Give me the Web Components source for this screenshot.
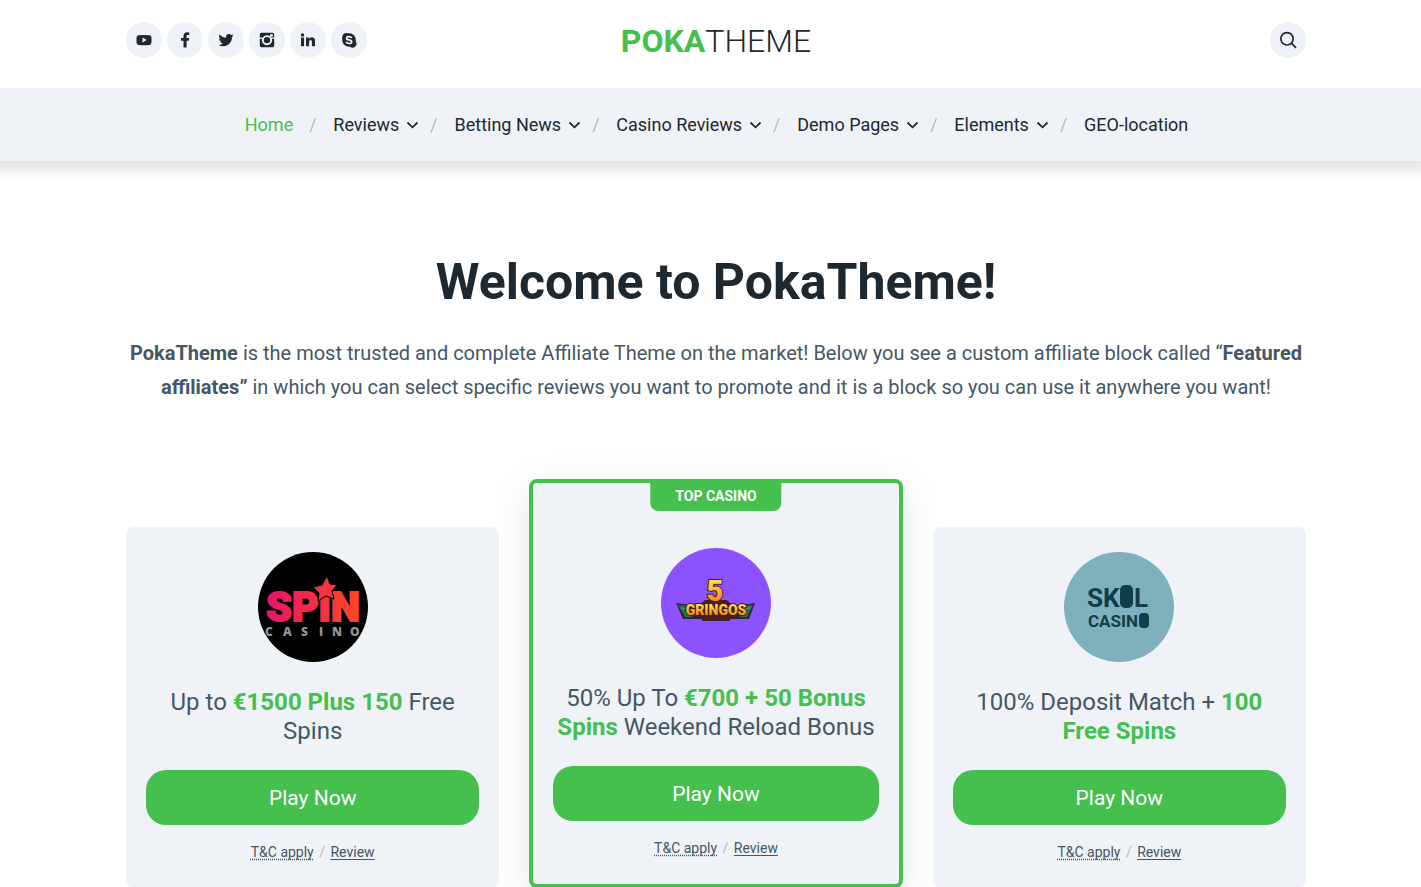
<!DOCTYPE html>
<html lang="en">
<head>
  <meta charset="UTF-8">
  <meta name="viewport" content="width=device-width, initial-scale=1.0">
  <title>PokaTheme</title>
  <style>
    :root {
      --green: #45bf4d;
      --dark: #1e2830;
      --text: #455764;
      --light: #eff3f8;
      --muted: #b4bac0;
      --wrap: 1180px;
      --gutter: 11px;
    }

    html {
      overflow: hidden;
    }

    body {
      margin: 0;
      height: 100vh;
      overflow: hidden auto;
      scrollbar-width: none;
      font-family: Roboto, sans-serif;
      color: var(--text);
      background: #fff;
    }
  </style>
</head>
<body>
  <site-header>
    <social-links slot="left"></social-links>
    <site-logo></site-logo>
    <search-button slot="right"></search-button>
  </site-header>

  <site-nav>
    <nav-item active>Home</nav-item>
    <nav-item menu>Reviews</nav-item>
    <nav-item menu>Betting News</nav-item>
    <nav-item menu>Casino Reviews</nav-item>
    <nav-item menu>Demo Pages</nav-item>
    <nav-item menu>Elements</nav-item>
    <nav-item>GEO-location</nav-item>
  </site-nav>

  <main>
    <page-intro>
      <span slot="title">Welcome to PokaTheme!</span>
      <b>PokaTheme</b> is the most trusted and complete Affiliate Theme on the market! Below you see a custom affiliate block called “<b>Featured affiliates”</b> in which you can select specific reviews you want to promote and it is a block so you can use it anywhere you want!
    </page-intro>

    <featured-affiliates>
      <affiliate-card>
        <spin-logo slot="logo"></spin-logo>
        Up to <strong>€1500 Plus 150</strong> Free Spins
      </affiliate-card>
      <affiliate-card badge="TOP CASINO">
        <gringos-logo slot="logo"></gringos-logo>
        50% Up To <strong>€700 + 50 Bonus Spins</strong> Weekend Reload Bonus
      </affiliate-card>
      <affiliate-card>
        <skol-logo slot="logo"></skol-logo>
        100% Deposit Match + <strong>100 Free Spins</strong>
      </affiliate-card>
    </featured-affiliates>
  </main>

  <script>
    class SiteHeader extends HTMLElement {
      constructor() {
        super();
        this.attachShadow({ mode: "open" });
      }

      static get styles() {
        return /* css */`
          :host {
            display: block;
          }

          header {
            display: grid;
            grid-template-columns: 1fr auto 1fr;
            align-items: center;
            max-width: var(--wrap);
            margin: 0 auto;
            padding: 22px 0 30px var(--gutter);
          }

          .right {
            display: flex;
            justify-content: flex-end;
          }
        `;
      }

      connectedCallback() {
        this.shadowRoot.innerHTML = /* html */`
        <style>${SiteHeader.styles}</style>
        <header>
          <slot name="left"></slot>
          <slot></slot>
          <div class="right"><slot name="right"></slot></div>
        </header>`;
      }
    }

    const SOCIAL_ICONS = {
      YouTube: `<path fill-rule="evenodd" d="M2.5 3.2Q8 2.6 13.5 3.2Q15.3 3.4 15.4 5Q15.7 8 15.4 11Q15.3 12.7 13.5 12.9Q8 13.4 2.5 12.9Q.7 12.7.6 11Q.3 8 .6 5Q.7 3.4 2.5 3.2ZM6.5 5.6V10.4L10.6 8Z"/>`,
      Facebook: `<path d="M12.3.5V3.1H10.8Q9.6 3.1 9.6 4.4V6H12.2L11.8 8.7H9.6V15.5H6.5V8.7H4V6H6.5V4.1Q6.5.3 10.1.3Q11.5.3 12.3.5Z"/>`,
      Twitter: `<path d="M15.5 3.5Q14.8 4.7 14 5.1C14.1 10.2 10.3 14.2 5.3 14.2Q2.6 14.2.6 12.9Q3.2 13 5 11.6Q2.9 11.3 2.1 9.5H3.4Q1.2 8.7 1 6.4L2.4 6.8Q.2 4.9 1.5 2.5Q4.2 5.6 8 5.8C7.4 2.1 11.3.9 13.1 3L15.1 2.3Q14.7 3.4 13.7 4Z"/>`,
      Instagram: `<path fill-rule="evenodd" d="M2.4.8H13.6Q15.2.8 15.2 2.4V13.6Q15.2 15.2 13.6 15.2H2.4Q.8 15.2.8 13.6V2.4Q.8.8 2.4.8ZM11 2.2V4.7H13.8V2.2ZM.8 5.5V6.8H3.1A5.1 5.1 0 1 0 12.9 6.8H15.2V5.5H12.2A5.1 5.1 0 0 0 3.8 5.5ZM8 4.9A3.2 3.2 0 1 1 8 11.3A3.2 3.2 0 1 1 8 4.9Z"/>`,
      LinkedIn: `<path d="M1 5.6H4.1V14.2H1ZM2.5 1.3A1.7 1.7 0 1 1 2.5 4.7A1.7 1.7 0 1 1 2.5 1.3ZM6 5.6H8.9V6.8Q9.8 5.3 11.7 5.3Q15 5.3 15 9V14.2H11.9V9.6Q11.9 7.9 10.6 7.9Q9.1 7.9 9.1 9.7V14.2H6Z"/>`,
      Skype: `<path d="M1.3 5A4 4 0 0 1 7 1.3A6.8 6.8 0 0 1 14.7 9.2A4 4 0 0 1 9 14.7A6.8 6.8 0 0 1 1.3 7Q.9 6 1.3 5Z"/><path d="M10.7 6Q10 4.6 8 4.6Q5.6 4.6 5.6 6.2Q5.6 7.5 8 7.9Q10.7 8.4 10.7 9.8Q10.7 11.5 8.2 11.5Q5.8 11.5 5.2 9.9" fill="none" stroke="#eff3f8" stroke-width="1.7"/>`
    };

    class SocialLinks extends HTMLElement {
      constructor() {
        super();
        this.attachShadow({ mode: "open" });
      }

      static get styles() {
        return /* css */`
          :host {
            display: flex;
            gap: 5px;
          }

          a {
            display: grid;
            place-items: center;
            width: 36px;
            height: 36px;
            border-radius: 50%;
            background: var(--light);
            color: var(--dark);
          }

          svg {
            width: 16px;
            height: 16px;
            fill: currentColor;
          }
        `;
      }

      connectedCallback() {
        this.shadowRoot.innerHTML = /* html */`
        <style>${SocialLinks.styles}</style>
        ${Object.entries(SOCIAL_ICONS).map(([name, icon]) => /* html */`
          <a href="#" aria-label="${name}"><svg viewBox="0 0 16 16">${icon}</svg></a>
        `).join("")}`;
      }
    }

    class SiteLogo extends HTMLElement {
      constructor() {
        super();
        this.attachShadow({ mode: "open" });
      }

      static get styles() {
        return /* css */`
          :host {
            display: block;
          }

          a {
            display: block;
            padding-top: 2px;
            font-size: 32px;
            line-height: 34px;
            font-weight: 300;
            color: var(--dark);
            text-decoration: none;
          }

          b {
            font-weight: 700;
            color: var(--green);
          }
        `;
      }

      connectedCallback() {
        this.shadowRoot.innerHTML = /* html */`
        <style>${SiteLogo.styles}</style>
        <a href="#"><b>POKA</b>THEME</a>`;
      }
    }

    class SearchButton extends HTMLElement {
      constructor() {
        super();
        this.attachShadow({ mode: "open" });
      }

      static get styles() {
        return /* css */`
          :host {
            display: block;
          }

          button {
            display: grid;
            place-items: center;
            width: 36px;
            height: 36px;
            padding: 0;
            border: 0;
            border-radius: 50%;
            background: var(--light);
            color: var(--dark);
            cursor: pointer;
          }

          svg {
            width: 18px;
            height: 18px;
            fill: none;
            stroke: currentColor;
            stroke-width: 1.7;
          }
        `;
      }

      connectedCallback() {
        this.shadowRoot.innerHTML = /* html */`
        <style>${SearchButton.styles}</style>
        <button type="button" aria-label="Search">
          <svg viewBox="0 0 18 18"><circle cx="8" cy="7.8" r="6.2"/><path d="M12.4 12.2L17 16.8"/></svg>
        </button>`;
      }
    }

    class SiteNav extends HTMLElement {
      constructor() {
        super();
        this.attachShadow({ mode: "open" });
      }

      static get styles() {
        return /* css */`
          :host {
            display: block;
            background: var(--light);
            box-shadow: 0 -2px 14px 10px rgba(0, 0, 0, 0.12);
            clip-path: inset(0 0 -30px);
          }

          nav {
            display: flex;
            flex-wrap: wrap;
            justify-content: center;
            padding: 22px 0 21px var(--gutter);
          }
        `;
      }

      connectedCallback() {
        this.shadowRoot.innerHTML = /* html */`
        <style>${SiteNav.styles}</style>
        <nav><slot></slot></nav>`;
      }
    }

    class NavItem extends HTMLElement {
      constructor() {
        super();
        this.attachShadow({ mode: "open" });
      }

      static get styles() {
        return /* css */`
          :host {
            display: flex;
            align-items: center;
            font-size: 18px;
            line-height: 30px;
          }

          a {
            display: flex;
            align-items: center;
            gap: 7px;
            padding: 0 16px 0 17px;
            color: var(--dark);
            text-decoration: none;
          }

          :host([active]) a {
            color: var(--green);
          }

          :host([menu]) a {
            padding-right: 11px;
          }

          svg {
            width: 13px;
            height: 8px;
            fill: none;
            stroke: currentColor;
            stroke-width: 1.8;
          }

          :host(:not(:last-of-type))::after {
            content: "/";
            font-weight: 300;
            color: #a2a8ae;
          }
        `;
      }

      connectedCallback() {
        const arrow = this.hasAttribute("menu")
          ? `<svg viewBox="0 0 13 8"><path d="M1.5 1.5L6.5 6.3L11.5 1.5"/></svg>`
          : "";
        this.shadowRoot.innerHTML = /* html */`
        <style>${NavItem.styles}</style>
        <a href="#"><slot></slot>${arrow}</a>`;
      }
    }

    class PageIntro extends HTMLElement {
      constructor() {
        super();
        this.attachShadow({ mode: "open" });
      }

      static get styles() {
        return /* css */`
          :host {
            display: block;
            max-width: var(--wrap);
            margin: 0 auto;
            padding: 91px 0 75px var(--gutter);
            text-align: center;
          }

          h1 {
            margin: 0 0 24px;
            font-size: 50px;
            line-height: 60px;
            font-weight: 700;
            color: var(--dark);
          }

          p {
            margin: 0;
            font-size: 20px;
            line-height: 34px;
          }
        `;
      }

      connectedCallback() {
        this.shadowRoot.innerHTML = /* html */`
        <style>${PageIntro.styles}</style>
        <h1><slot name="title"></slot></h1>
        <p><slot></slot></p>`;
      }
    }

    class FeaturedAffiliates extends HTMLElement {
      constructor() {
        super();
        this.attachShadow({ mode: "open" });
      }

      static get styles() {
        return /* css */`
          :host {
            display: grid;
            grid-template-columns: repeat(3, 1fr);
            gap: 30px;
            align-items: end;
            max-width: var(--wrap);
            margin: 0 auto;
            padding-left: var(--gutter);
          }
        `;
      }

      connectedCallback() {
        this.shadowRoot.innerHTML = /* html */`
        <style>${FeaturedAffiliates.styles}</style>
        <slot></slot>`;
      }
    }

    class AffiliateCard extends HTMLElement {
      constructor() {
        super();
        this.attachShadow({ mode: "open" });
      }

      static get styles() {
        return /* css */`
          :host {
            display: block;
            position: relative;
            padding: 25px 20px 23px;
            border-radius: 8px;
            background: var(--light);
            text-align: center;
          }

          :host([badge]) {
            padding-top: 65px;
            border: 4px solid var(--green);
            box-shadow: 0 10px 40px rgba(0, 0, 0, 0.1);
          }

          .badge {
            position: absolute;
            top: 0;
            left: 50%;
            transform: translateX(-50%);
            padding: 0 25px 2px;
            border-radius: 0 0 8px 8px;
            background: var(--green);
            color: #fff;
            font-size: 14px;
            line-height: 26px;
            font-weight: 700;
            white-space: nowrap;
          }

          .logo {
            width: 110px;
            height: 110px;
            margin: 0 auto 26px;
            border-radius: 50%;
            overflow: hidden;
          }

          h2 {
            margin: 0 0 24px;
            font-size: 24px;
            line-height: 29px;
            font-weight: 400;
          }

          ::slotted(strong) {
            font-weight: 700;
            color: var(--green);
          }

          .play {
            display: block;
            padding-top: 2px;
            border-radius: 20px;
            background: var(--green);
            color: #fff;
            font-size: 21px;
            line-height: 53px;
            text-decoration: none;
          }

          .terms {
            margin: 14px 0 0;
            font-size: 14px;
            line-height: 26px;
            color: var(--muted);
          }

          .terms a {
            margin: 0 2px;
            color: var(--text);
            text-underline-offset: 2px;
          }

          .terms .tc {
            text-decoration: underline dotted;
            text-decoration-skip-ink: none;
          }
        `;
      }

      connectedCallback() {
        const badge = this.getAttribute("badge");
        this.shadowRoot.innerHTML = /* html */`
        <style>${AffiliateCard.styles}</style>
        ${badge ? `<span class="badge">${badge}</span>` : ""}
        <div class="logo"><slot name="logo"></slot></div>
        <h2><slot></slot></h2>
        <a class="play" href="#">Play Now</a>
        <p class="terms"><a class="tc" href="#">T&amp;C apply</a> / <a href="#">Review</a></p>`;
      }
    }

    // Round casino logos, 110 x 110
    class SpinLogo extends HTMLElement {
      constructor() {
        super();
        this.attachShadow({ mode: "open" });
      }

      connectedCallback() {
        this.shadowRoot.innerHTML = /* html */`
        <style>
          :host, svg { display: block; }
          text { font-family: Roboto, sans-serif; font-weight: 900; }
          .small { font-family: "Open Sans", sans-serif; font-size: 12px; font-weight: 800; fill: #929298; }
        </style>
        <svg width="110" height="110" viewBox="0 0 110 110">
          <defs>
            <linearGradient id="spin" gradientUnits="userSpaceOnUse" x1="8" y1="0" x2="102" y2="0">
              <stop offset="0" stop-color="#e91369"/>
              <stop offset="1" stop-color="#fb4826"/>
            </linearGradient>
          </defs>
          <rect width="110" height="110"/>
          <g fill="url(#spin)">
            <text x="55" y="69" font-size="41" text-anchor="middle" stroke="url(#spin)" stroke-width="2">SPIN</text>
            <path stroke="#000" stroke-width="1" d="M69 24L72 32L79 33L74 39L76 47L68 44L60 49L61 41L55 35L64 33Z"/>
          </g>
          <text class="small" x="7 25 43 61 74 92" y="84">CASINO</text>
        </svg>`;
      }
    }

    class GringosLogo extends HTMLElement {
      constructor() {
        super();
        this.attachShadow({ mode: "open" });
      }

      connectedCallback() {
        this.shadowRoot.innerHTML = /* html */`
        <style>
          :host, svg { display: block; }
          text { font-family: Roboto, sans-serif; font-weight: 900; paint-order: stroke; stroke: #4d1d1e; text-anchor: middle; }
        </style>
        <svg width="110" height="110" viewBox="0 0 110 110">
          <defs>
            <linearGradient id="gold" x1="0" y1="0" x2="0" y2="1">
              <stop offset="0.2" stop-color="#ffe04a"/>
              <stop offset="0.8" stop-color="#f78b12"/>
            </linearGradient>
          </defs>
          <rect width="110" height="110" fill="#8c52ff"/>
          <path d="M15 55L38 58H72L94 55L88 71L70 71L68 73H42L40 71L22 71Z" fill="#352332"/>
          <path d="M17 57L29 58L31 69L24 69ZM92 57L81 58L79 69L86 69Z" fill="#1b735c"/>
          <path d="M20 60L28 61M24 65L29 65M89 60L82 61M86 65L81 65" stroke="#51a477" stroke-width="1"/>
          <path d="M44 52L66 52L72 58L68 72L42 72L37 58Z" fill="#4d1d1e"/>
          <text x="54" y="53" font-size="29" stroke-width="2" fill="url(#gold)">5</text>
          <text x="55" y="67" font-size="14" stroke-width="2" fill="url(#gold)">GRINGOS</text>
        </svg>`;
      }
    }

    class SkolLogo extends HTMLElement {
      constructor() {
        super();
        this.attachShadow({ mode: "open" });
      }

      connectedCallback() {
        this.shadowRoot.innerHTML = /* html */`
        <style>
          :host, svg { display: block; }
          text { font-family: Roboto, sans-serif; font-weight: 700; }
        </style>
        <svg width="110" height="110" viewBox="0 0 110 110">
          <rect width="110" height="110" fill="#7eb0bd"/>
          <g fill="#123d4a">
            <text x="23" y="55" font-size="26">SK</text>
            <rect x="56" y="33" width="13" height="23" rx="5"/>
            <text x="70" y="55" font-size="26">L</text>
            <text x="24" y="75" font-size="17">CASIN</text>
            <rect x="75" y="61" width="10" height="15" rx="4"/>
          </g>
        </svg>`;
      }
    }

    customElements.define("site-header", SiteHeader);
    customElements.define("social-links", SocialLinks);
    customElements.define("site-logo", SiteLogo);
    customElements.define("search-button", SearchButton);
    customElements.define("site-nav", SiteNav);
    customElements.define("nav-item", NavItem);
    customElements.define("page-intro", PageIntro);
    customElements.define("featured-affiliates", FeaturedAffiliates);
    customElements.define("affiliate-card", AffiliateCard);
    customElements.define("spin-logo", SpinLogo);
    customElements.define("gringos-logo", GringosLogo);
    customElements.define("skol-logo", SkolLogo);
  </script>
</body>
</html>
